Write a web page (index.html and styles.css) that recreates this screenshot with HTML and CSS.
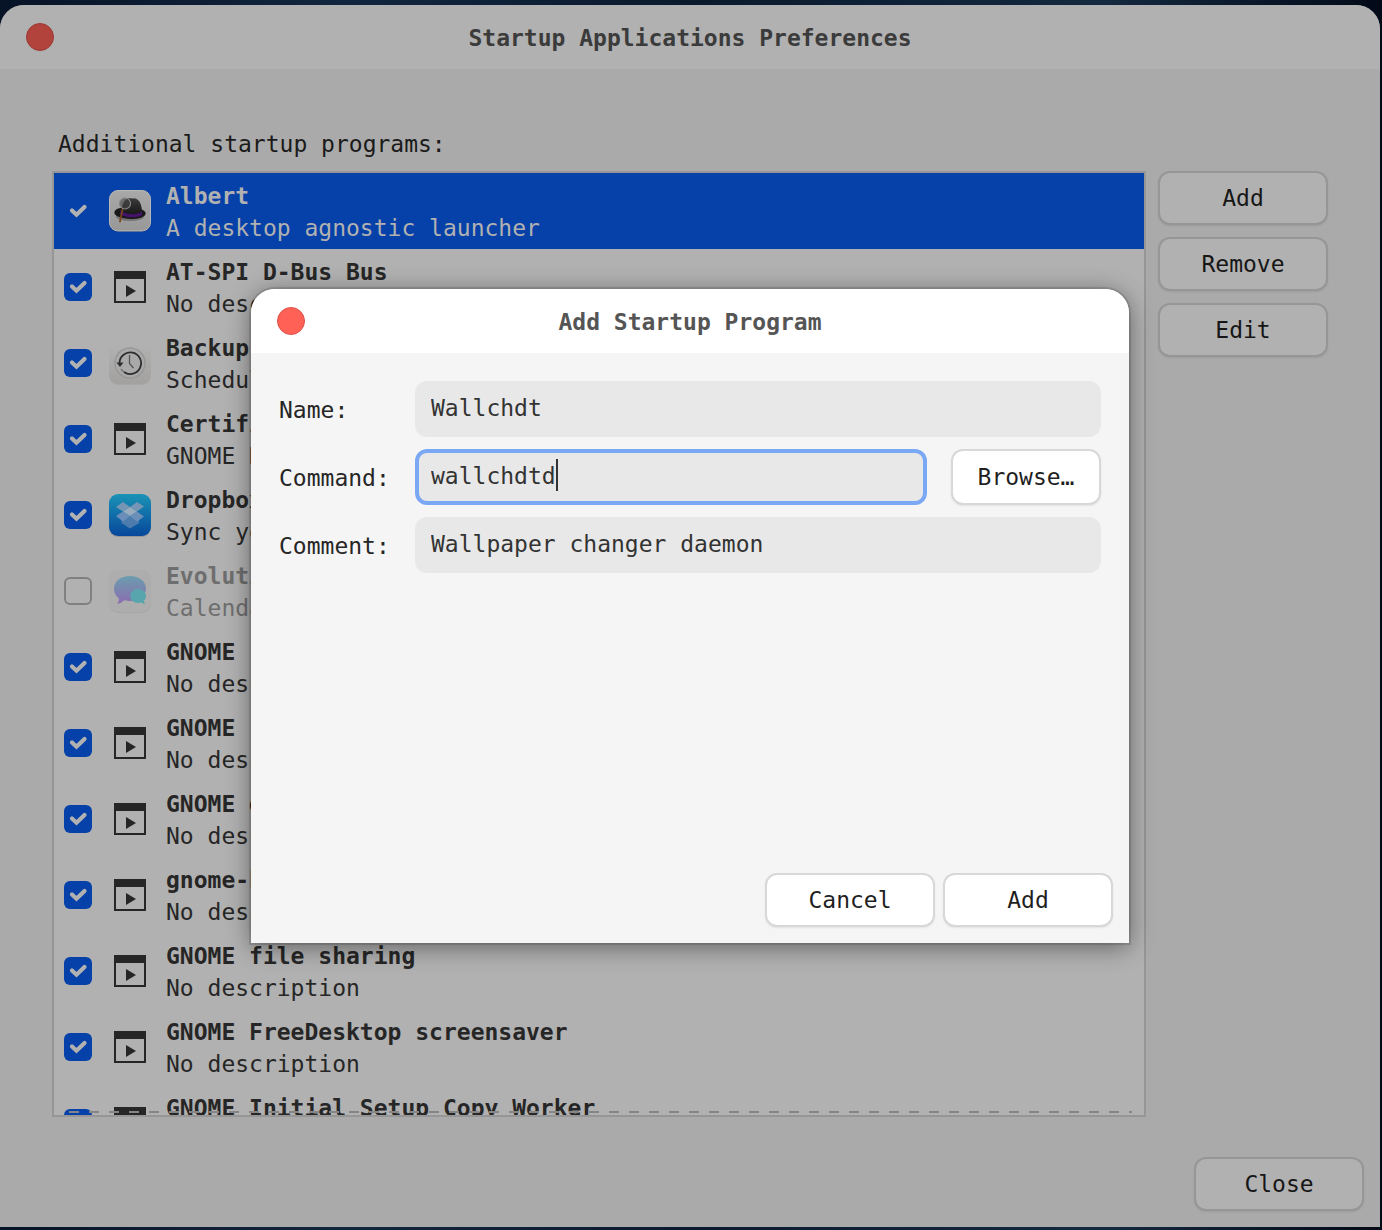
FILE: index.html
```html
<!DOCTYPE html>
<html lang="en">
<head>
<meta charset="utf-8">
<title>Startup Applications Preferences</title>
<link rel="stylesheet" href="styles.css">
</head>
<body>
<svg class="defs" aria-hidden="true">
  <defs>
    <linearGradient id="tile" x1="0" y1="0" x2="0" y2="1"><stop offset="0" stop-color="#b2b2b2"/><stop offset="1" stop-color="#a2a19f"/></linearGradient>
    <linearGradient id="hat-tile" x1="0" y1="0" x2="0" y2="1"><stop offset="0" stop-color="#a8a8a8"/><stop offset="1" stop-color="#989898"/></linearGradient>
    <linearGradient id="hat-felt" x1="0" y1="0" x2="0" y2="1"><stop offset="0" stop-color="#3a3a3a"/><stop offset="1" stop-color="#141414"/></linearGradient>
    <linearGradient id="box-tile" x1="0" y1="0" x2="0" y2="1"><stop offset="0" stop-color="#1a93b6"/><stop offset="1" stop-color="#07479b"/></linearGradient>
    <linearGradient id="chat" x1="0" y1="0" x2="0" y2="1"><stop offset="0" stop-color="#6b9dae"/><stop offset="1" stop-color="#8b6cb0"/></linearGradient>
    <symbol id="exec" viewBox="0 0 42 42">
      <path fill="#262626" fill-rule="evenodd" d="M5 5h32v32H5zM7 13v22h28V13z"/>
      <path fill="#262626" d="M17 19l10 6-10 6z"/>
    </symbol>
  </defs>
</svg>

<div class="window">
  <header class="titlebar">
    <button class="dot dot-dim" type="button" aria-label="Close window"></button>
    <h1 class="title title-dim">Startup Applications Preferences</h1>
  </header>

  <main class="content">
    <h2 class="caption">Additional startup programs:</h2>
    <div class="columns">
      <ul class="programs">
        <li><label class="row selected">
          <input class="tick" type="checkbox" checked>
          <svg class="icon" viewBox="0 0 42 42">
            <rect y="1" width="42" height="41" rx="9" fill="#000" opacity=".25"/>
            <rect x=".5" y=".5" width="41" height="40.5" rx="8.5" fill="url(#hat-tile)" stroke="#b8b8b8"/>
            <ellipse cx="21" cy="26.5" rx="14" ry="4.5" fill="#000" opacity=".25"/>
            <ellipse cx="21" cy="23" rx="15.7" ry="6" transform="rotate(2 21 23)" fill="#191919"/>
            <path fill="url(#hat-felt)" d="M12 23c1-7 2-13 7-14.500 2-.6 4 .3 6-.3 6 .8 8 7 8 14.800-5 4-16 4-21 0z"/>
            <path fill="#451369" d="M11.500 20.500c5 4.500 17 5 21.500 1v3.500c-5 3.500-17 3-22-1z"/>
            <path d="M13.500 19.500l-2.500 12" stroke="#7b4520" stroke-width="1.800" stroke-linecap="round"/>
            <circle cx="16" cy="13.500" r="5.500" fill="#444" fill-opacity=".6" stroke="#858585" stroke-width="1.200"/>
          </svg>
          <span class="text"><b>Albert</b><span>A desktop agnostic launcher</span></span>
        </label></li>
        <li><label class="row">
          <input class="tick" type="checkbox" checked>
          <svg class="icon"><use href="#exec"/></svg>
          <span class="text"><b>AT-SPI D-Bus Bus</b><span>No description</span></span>
        </label></li>
        <li><label class="row">
          <input class="tick" type="checkbox" checked>
          <svg class="icon" viewBox="0 0 42 42">
            <rect y="1" width="42" height="42" rx="9" fill="#000" opacity=".06"/>
            <rect width="42" height="42" rx="9" fill="url(#tile)"/>
            <circle cx="21" cy="21" r="15" fill="#a9a9a9" stroke="#989898" stroke-width="1.500"/>
            <path d="M10.500 21A10.800 10.800 0 1 1 15 30" fill="none" stroke="#2d2d2d" stroke-width="1.800"/>
            <path d="M15 30a10.800 10.800 0 0 1-3-3" fill="none" stroke="#777" stroke-width="1.500"/>
            <path d="M7.500 20.500h7L11 25z" fill="#2d2d2d"/>
            <path d="M20.500 13v8.500l4 4.500" fill="none" stroke="#555" stroke-width="1.300"/>
          </svg>
          <span class="text"><b>Backup Monitor</b><span>Schedules backups</span></span>
        </label></li>
        <li><label class="row">
          <input class="tick" type="checkbox" checked>
          <svg class="icon"><use href="#exec"/></svg>
          <span class="text"><b>Certificate Storage</b><span>GNOME Keyring</span></span>
        </label></li>
        <li><label class="row">
          <input class="tick" type="checkbox" checked>
          <svg class="icon" viewBox="0 0 42 42">
            <rect y="1" width="42" height="42" rx="9" fill="#000" opacity=".15"/>
            <rect width="42" height="42" rx="9" fill="url(#box-tile)"/>
            <path fill="#4c7bae" d="M12.500 25l8.500-3 9 3v4l-9 5.500-8.500-5.500z"/>
            <path fill="#7595b5" d="M14 8l7 5-7 4.500L7 13zM28 8l7 4.500-7 5-7-4.500z"/>
            <path fill="#6b8fb8" d="M14 17.500l7 4.500-7 5.500L7 22zM28 17.500l7 5-7 5-7-5.500z"/>
            <path fill="#98acbd" d="M21 13l7 4.500-7 4.500-7-4.500z"/>
          </svg>
          <span class="text"><b>Dropbox</b><span>Sync your files</span></span>
        </label></li>
        <li><label class="row off">
          <input class="tick" type="checkbox">
          <svg class="icon" viewBox="0 0 42 42">
            <rect y="1" width="42" height="42" rx="9" fill="#000" opacity=".06"/>
            <rect width="42" height="42" rx="9" fill="#adadad"/>
            <path fill="url(#chat)" d="M21 6c9 0 16 5 16 12.500S30 31 21 31c-2 0-4 0-6-.7-2 2-4 3.200-6.500 3.700 1-2 1.500-4 1.200-6C6.500 26 5 22.500 5 18.500 5 11 12 6 21 6z"/>
            <path fill="#58a5ad" d="M29 19c4.500 0 8 3 8 7 0 2-1 3.500-2 4.500 0 1.500.5 2.500 1.200 3.500-1.700 0-3-.7-4-1.500-6 1.500-11-1.500-11-6.500 0-4 3.500-7 7.800-7z"/>
          </svg>
          <span class="text"><b>Evolution Alarm</b><span>Calendar events</span></span>
        </label></li>
        <li><label class="row">
          <input class="tick" type="checkbox" checked>
          <svg class="icon"><use href="#exec"/></svg>
          <span class="text"><b>GNOME</b><span>No description</span></span>
        </label></li>
        <li><label class="row">
          <input class="tick" type="checkbox" checked>
          <svg class="icon"><use href="#exec"/></svg>
          <span class="text"><b>GNOME</b><span>No description</span></span>
        </label></li>
        <li><label class="row">
          <input class="tick" type="checkbox" checked>
          <svg class="icon"><use href="#exec"/></svg>
          <span class="text"><b>GNOME datetime</b><span>No description</span></span>
        </label></li>
        <li><label class="row">
          <input class="tick" type="checkbox" checked>
          <svg class="icon"><use href="#exec"/></svg>
          <span class="text"><b>gnome-keyring</b><span>No description</span></span>
        </label></li>
        <li><label class="row">
          <input class="tick" type="checkbox" checked>
          <svg class="icon"><use href="#exec"/></svg>
          <span class="text"><b>GNOME file sharing</b><span>No description</span></span>
        </label></li>
        <li><label class="row">
          <input class="tick" type="checkbox" checked>
          <svg class="icon"><use href="#exec"/></svg>
          <span class="text"><b>GNOME FreeDesktop screensaver</b><span>No description</span></span>
        </label></li>
        <li><label class="row">
          <input class="tick" type="checkbox" checked>
          <svg class="icon"><use href="#exec"/></svg>
          <span class="text"><b>GNOME Initial Setup Copy Worker</b><span>No description</span></span>
        </label></li>
      </ul>
      <div class="actions">
        <button class="btn btn-dim" type="button">Add</button>
        <button class="btn btn-dim" type="button">Remove</button>
        <button class="btn btn-dim" type="button">Edit</button>
      </div>
    </div>
  </main>

  <footer class="window-footer">
    <button class="btn btn-dim" type="button">Close</button>
  </footer>

  <div class="overlay">
    <form class="dialog" role="dialog" aria-labelledby="dialog-title">
      <header class="titlebar titlebar-active">
        <button class="dot" type="button" aria-label="Close dialog"></button>
        <h2 class="title" id="dialog-title">Add Startup Program</h2>
      </header>
      <div class="fields">
        <label class="field-label" for="name">Name:</label>
        <input class="entry" id="name" type="text" value="Wallchdt">
        <label class="field-label" for="command">Command:</label>
        <div class="command">
          <div class="focused">
            <input class="entry" id="command" type="text" value="wallchdtd">
            <span class="caret"></span>
          </div>
          <button class="btn browse" type="button">Browse…</button>
        </div>
        <label class="field-label" for="comment">Comment:</label>
        <input class="entry" id="comment" type="text" value="Wallpaper changer daemon">
      </div>
      <footer class="dialog-footer">
        <button class="btn" type="button">Cancel</button>
        <button class="btn" type="submit">Add</button>
      </footer>
    </form>
  </div>
</div>
</body>
</html>
```
FILE: styles.css
```css
* { box-sizing: border-box; }

body {
  margin: 0;
  height: 100vh;
  padding: 5px 2px 3px 0;
  display: flex;
  background: linear-gradient(90deg, #071326, #12263f 25%, #0a1a2e 50%, #14293f 80%, #020a18);
  font: 23px/32px "DejaVu Sans Mono", monospace;
  color: #262626;
}

button, input { font: inherit; margin: 0; }
h1, h2 { margin: 0; font-size: inherit; }

.defs { position: absolute; width: 0; height: 0; }

.window {
  position: relative;
  flex: 1;
  min-width: 0;
  display: flex;
  flex-direction: column;
  border-radius: 24px 24px 0 0;
  background: #aaaaaa;
}

.titlebar {
  flex: none;
  height: 64px;
  padding: 0 26px;
  display: grid;
  grid-template-columns: 28px 1fr 28px;
  align-items: center;
  border-radius: 24px 24px 0 0;
  background: #b1b1b1;
}
.titlebar-active { background: #fff; }

.title { padding-top: 2px; text-align: center; color: #555; font-weight: bold; }
.title-dim { color: #3b3b3b; }

.dot {
  width: 28px;
  height: 28px;
  padding: 0;
  border: 1px solid #dc5349;
  border-radius: 50%;
  background: #ff6157;
}
.dot-dim { background: #b1433c; border-color: #983a33; }

.content {
  flex: 1;
  min-height: 0;
  padding: 59px 52px 0;
  display: flex;
  flex-direction: column;
  gap: 11px;
}
.caption { padding-left: 6px; font-weight: normal; color: #1a1a1a; }

.columns {
  flex: 1;
  min-height: 0;
  display: grid;
  grid-template-columns: 1fr 170px;
  grid-template-rows: 100%;
  gap: 12px;
}

.programs {
  position: relative;
  margin: 0;
  padding: 0;
  list-style: none;
  overflow: hidden;
  border: 2px solid #969696;
  background: #b1b1b1;
}
/* dashed hint that the list scrolls further */
.programs::after {
  content: "";
  position: absolute;
  left: 15px;
  right: 12px;
  bottom: 2px;
  height: 2px;
  background: repeating-linear-gradient(90deg, #858585 0 10px, transparent 10px 20px);
}

.row {
  height: 76px;
  padding: 0 10px;
  display: flex;
  align-items: center;
  white-space: nowrap;
}
.text { display: flex; flex-direction: column; margin-left: 15px; padding-top: 2px; }
.selected { background: #0641a9; color: #b1b1b1; }
.off .text { color: #6e6e6e; }

.tick {
  appearance: none;
  flex: none;
  width: 28px;
  height: 28px;
  border: 2px solid #808080;
  border-radius: 6px;
}
.tick:checked {
  border: 0;
  background: #0641a9 url("data:image/svg+xml,%3Csvg xmlns='http://www.w3.org/2000/svg' viewBox='0 0 28 28'%3E%3Cpath d='M8 13.5l4.5 4.2L20.500 10' fill='none' stroke='%23b1b1b1' stroke-width='4.2' stroke-linecap='round' stroke-linejoin='miter'/%3E%3C/svg%3E") center / 28px 28px;
}

.icon { flex: none; width: 42px; height: 42px; margin-left: 17px; overflow: visible; }

.actions { display: flex; flex-direction: column; gap: 12px; }

.btn {
  width: 170px;
  height: 54px;
  padding: 0;
  border: 2px solid #d8d8d8;
  border-radius: 12px;
  background: #fff;
  box-shadow: 0 1px 2px rgba(0, 0, 0, .08);
  color: #1f1f1f;
}
.btn-dim { border-color: #969696; background: #b1b1b1; color: #161616; }

.window-footer {
  display: flex;
  justify-content: flex-end;
  padding: 40px 16px 16px;
}

.overlay {
  position: absolute;
  inset: 0;
  display: grid;
  place-items: center;
}

.dialog {
  width: 878px;
  max-width: 100%;
  min-height: 654px;
  display: flex;
  flex-direction: column;
  border-radius: 24px 24px 0 0;
  background: #f5f5f5;
  box-shadow: 0 0 0 2px rgba(0, 0, 0, .12), 0 4px 24px rgba(0, 0, 0, .45);
}

.fields {
  flex: 1;
  padding: 28px;
  display: grid;
  grid-template-columns: 124px 1fr;
  grid-auto-rows: 56px;
  gap: 12px;
  align-items: center;
}
.field-label { padding-top: 2px; }

.entry {
  display: block;
  width: 100%;
  height: 56px;
  padding: 0 16px 2px;
  border: 0;
  border-radius: 12px;
  background: #e8e8e8;
  color: #333;
}

.command { display: grid; grid-template-columns: 1fr 150px; gap: 24px; }
.focused { position: relative; }
.focused .entry { padding: 0 12px 2px; border: 4px solid #7ba8f5; caret-color: transparent; outline: 0; }
.caret {
  position: absolute;
  top: 10px;
  left: calc(16px + 9ch);
  width: 2px;
  height: 32px;
  background: #333;
}
.browse { width: 150px; height: 56px; }

.dialog-footer {
  display: flex;
  justify-content: flex-end;
  gap: 8px;
  padding: 16px;
}
```
